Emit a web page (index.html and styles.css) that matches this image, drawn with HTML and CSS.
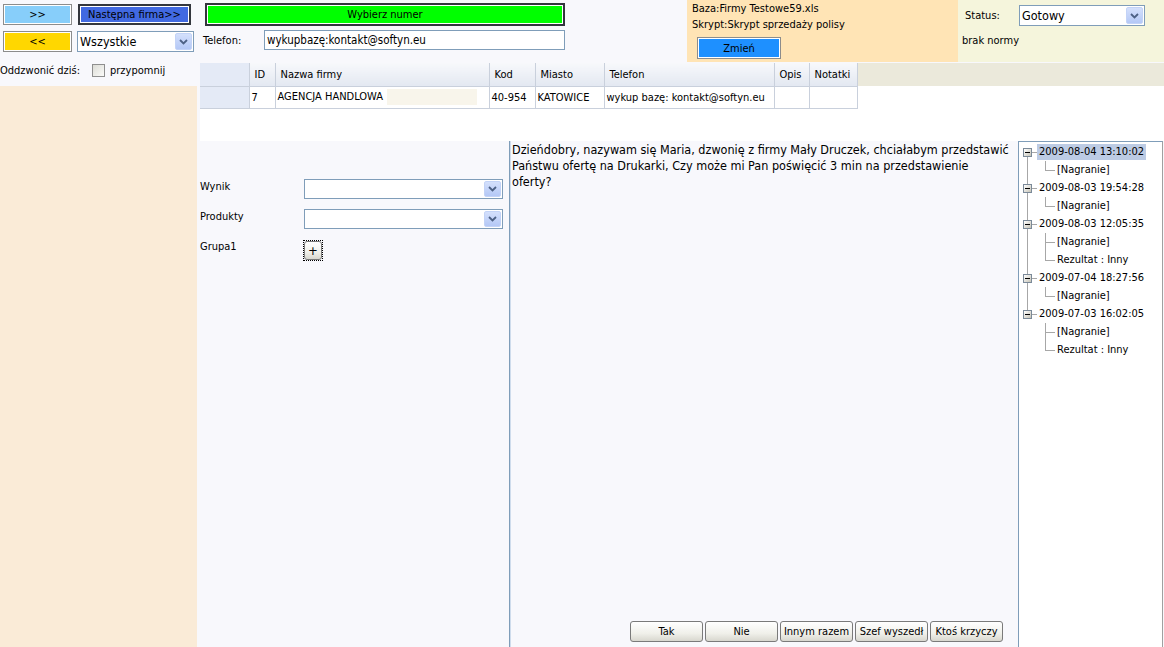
FILE: index.html
```html
<!DOCTYPE html>
<html lang="pl">
<head>
  <meta charset="UTF-8">
  <title>Telemarketing - rozmowa</title>
  <link rel="stylesheet" href="styles.css">
</head>
<body>
  <div class="app">
    <!-- lewa kolumna -->
    <aside class="side">
      <div class="side-top">
        <div class="side-row">
          <button class="btn-color btn-sky">&gt;&gt;</button>
          <button class="btn-color btn-royal is-default">Następna firma&gt;&gt;</button>
        </div>
        <div class="side-row">
          <button class="btn-color btn-gold">&lt;&lt;</button>
          <div class="combo combo-filter">Wszystkie<span class="arrow"><svg width="9" height="6" viewBox="0 0 9 6"><path d="M1 1 L4.5 4.5 L8 1" fill="none" stroke="#4d6185" stroke-width="1.8"/></svg></span></div>
        </div>
        <div class="callback">
          <span class="callback-label">Oddzwonić dziś:</span>
          <span class="check"></span>
          <span>przypomnij</span>
        </div>
      </div>
      <div class="side-fill"></div>
    </aside>

    <div class="work">
      <!-- pasek górny -->
      <div class="topbar">
        <div class="dial">
          <button class="btn-color btn-green is-default">Wybierz numer</button>
          <div class="phone-row">
            <span class="phone-label">Telefon:</span>
            <div class="textbox">wykupbazę:kontakt@softyn.eu</div>
          </div>
        </div>
        <div class="info">
          <div>Baza:Firmy Testowe59.xls</div>
          <div>Skrypt:Skrypt sprzedaży polisy</div>
          <button class="btn-color btn-dodger">Zmień</button>
        </div>
        <div class="status">
          <div class="status-row">
            <span class="status-label">Status:</span>
            <div class="combo combo-status">Gotowy<span class="arrow"><svg width="9" height="6" viewBox="0 0 9 6"><path d="M1 1 L4.5 4.5 L8 1" fill="none" stroke="#4d6185" stroke-width="1.8"/></svg></span></div>
          </div>
          <div class="norm">brak normy</div>
        </div>
      </div>

      <!-- tabela firm -->
      <div class="grid">
        <table>
          <thead>
            <tr>
              <th class="rowhead c-head"></th>
              <th class="c-id">ID</th>
              <th class="c-name">Nazwa firmy</th>
              <th class="c-code">Kod</th>
              <th class="c-city">Miasto</th>
              <th class="c-phone">Telefon</th>
              <th class="c-desc">Opis</th>
              <th class="c-notes">Notatki</th>
            </tr>
          </thead>
          <tbody>
            <tr>
              <td class="rowhead"></td>
              <td>7</td>
              <td>AGENCJA HANDLOWA <span class="masked"></span></td>
              <td>40-954</td>
              <td>KATOWICE</td>
              <td>wykup bazę: kontakt@softyn.eu</td>
              <td></td>
              <td></td>
            </tr>
          </tbody>
        </table>
      </div>

      <div class="main">
        <!-- formularz wyniku -->
        <div class="form">
          <div class="form-row">
            <span class="form-label">Wynik</span>
            <div class="combo combo-form"><span class="arrow"><svg width="9" height="6" viewBox="0 0 9 6"><path d="M1 1 L4.5 4.5 L8 1" fill="none" stroke="#4d6185" stroke-width="1.8"/></svg></span></div>
          </div>
          <div class="form-row">
            <span class="form-label">Produkty</span>
            <div class="combo combo-form"><span class="arrow"><svg width="9" height="6" viewBox="0 0 9 6"><path d="M1 1 L4.5 4.5 L8 1" fill="none" stroke="#4d6185" stroke-width="1.8"/></svg></span></div>
          </div>
          <div class="form-row">
            <span class="form-label">Grupa1</span>
            <span class="focus-ring"><button class="btn-xp btn-plus">+</button></span>
          </div>
        </div>

        <!-- skrypt rozmowy -->
        <div class="script">
          <p class="script-text">Dzieńdobry, nazywam się Maria, dzwonię z firmy Mały Druczek, chciałabym przedstawić Państwu ofertę na Drukarki, Czy może mi Pan poświęcić 3 min na przedstawienie<br>oferty?</p>
          <div class="answers">
            <button class="btn-xp">Tak</button>
            <button class="btn-xp">Nie</button>
            <button class="btn-xp">Innym razem</button>
            <button class="btn-xp">Szef wyszedł</button>
            <button class="btn-xp">Ktoś krzyczy</button>
          </div>
        </div>

        <!-- historia kontaktów -->
        <div class="tree">
          <div class="t-row"><span class="cell root first"><span class="minus"></span></span><span class="t-text selected">2009-08-04 13:10:02</span></div>
          <div class="t-row"><span class="cell pipe"></span><span class="cell ell"></span><span class="t-text">[Nagranie]</span></div>
          <div class="t-row"><span class="cell root"><span class="minus"></span></span><span class="t-text">2009-08-03 19:54:28</span></div>
          <div class="t-row"><span class="cell pipe"></span><span class="cell ell"></span><span class="t-text">[Nagranie]</span></div>
          <div class="t-row"><span class="cell root"><span class="minus"></span></span><span class="t-text">2009-08-03 12:05:35</span></div>
          <div class="t-row"><span class="cell pipe"></span><span class="cell tee"></span><span class="t-text">[Nagranie]</span></div>
          <div class="t-row"><span class="cell pipe"></span><span class="cell ell"></span><span class="t-text">Rezultat : Inny</span></div>
          <div class="t-row"><span class="cell root"><span class="minus"></span></span><span class="t-text">2009-07-04 18:27:56</span></div>
          <div class="t-row"><span class="cell pipe"></span><span class="cell ell"></span><span class="t-text">[Nagranie]</span></div>
          <div class="t-row"><span class="cell root last"><span class="minus"></span></span><span class="t-text">2009-07-03 16:02:05</span></div>
          <div class="t-row"><span class="cell"></span><span class="cell tee"></span><span class="t-text">[Nagranie]</span></div>
          <div class="t-row"><span class="cell"></span><span class="cell ell"></span><span class="t-text">Rezultat : Inny</span></div>
        </div>
      </div>
    </div>
  </div>
</body>
</html>
```

FILE: styles.css
```css
body {
  margin: 0;
  font-family: "DejaVu Sans Condensed", "Liberation Sans", sans-serif;
  font-size: 11px;
  color: #000;
  background: #f8f8fc;
}

.app {
  display: flex;
  width: 1164px;
  height: 647px;
  overflow: hidden;
}

button {
  font-family: inherit;
  font-size: 11px;
  color: #000;
  padding: 0;
  cursor: pointer;
}

/* lewa kolumna */
.side {
  width: 197px;
  flex-shrink: 0;
  display: flex;
  flex-direction: column;
}

.side-top {
  height: 86px;
  padding: 4px 0 0 3px;
  box-sizing: border-box;
}

.side-row {
  display: flex;
  align-items: center;
  height: 21px;
}

.side-row + .side-row {
  margin-top: 6px;
}

.side-fill {
  flex: 1;
  background: #faebd7;
}

.btn-color {
  height: 21px;
  box-sizing: border-box;
  border: 1px solid #8c8c8c;
  box-shadow: inset 0 0 0 1px #fff;
  text-align: center;
}

.btn-color.is-default {
  border: 2px solid #33363d;
}

.btn-sky {
  width: 69px;
  background: #87cefa;
}

.btn-royal {
  width: 113px;
  margin-left: 6px;
  background: #4169e1;
}

.btn-gold {
  width: 69px;
  background: #ffd700;
}

.btn-green {
  display: block;
  width: 360px;
  height: 23px;
  background: #00ff00;
}

.btn-dodger {
  display: block;
  width: 84px;
  height: 22px;
  margin: 4px 0 0 5px;
  background: #1e90ff;
}

.combo {
  display: flex;
  align-items: center;
  height: 21px;
  box-sizing: border-box;
  border: 1px solid #7f9db9;
  background: #fff;
  padding-left: 2px;
  font-size: 12.5px;
}

.combo .arrow {
  margin-left: auto;
  margin-right: 1px;
  width: 17px;
  height: 17px;
  border-radius: 2px;
  border: 1px solid #c3d3f7;
  box-sizing: border-box;
  background: linear-gradient(#d4e0fc, #b4c8f6);
  display: flex;
  align-items: center;
  justify-content: center;
}

.combo-filter {
  width: 117px;
  margin-left: 5px;
}

.callback {
  display: flex;
  align-items: center;
  margin: 12px 0 0 -3px;
}

.callback-label {
  width: 92px;
}

.check {
  width: 13px;
  height: 13px;
  box-sizing: border-box;
  border: 1px solid #8f8f8f;
  background: linear-gradient(135deg, #dcdcd6, #fbfbf9);
  margin-right: 5px;
}

/* pasek górny */
.work {
  flex: 1;
  display: flex;
  flex-direction: column;
}

.topbar {
  display: flex;
  height: 63px;
}

.dial {
  width: 490px;
  padding: 3px 0 0 8px;
  box-sizing: border-box;
}

.phone-row {
  display: flex;
  align-items: center;
  margin: 4px 0 0 -2px;
}

.phone-label {
  width: 61px;
}

.textbox {
  width: 301px;
  height: 20px;
  box-sizing: border-box;
  border: 1px solid #7f9db9;
  background: #fff;
  padding-left: 2px;
  font-size: 11.5px;
  line-height: 18px;
}

.info {
  width: 271px;
  height: 62px;
  background: #ffe4b5;
  padding: 1px 0 0 5px;
  box-sizing: border-box;
  line-height: 16px;
}

.status {
  flex: 1;
  height: 62px;
  background: #f5f5dc;
  padding: 5px 0 0 4px;
  box-sizing: border-box;
}

.status-row {
  display: flex;
  align-items: center;
}

.status-label {
  width: 54px;
  padding-left: 3px;
}

.combo-status {
  width: 126px;
}

.norm {
  margin-top: 8px;
}

/* tabela */
.grid {
  margin-left: 3px;
  height: 78px;
  background: linear-gradient(#ebe9db, #ebe9db) 0 0 / 100% 23px no-repeat, #fff;
}

.grid table {
  border-collapse: collapse;
}

.grid th,
.grid td {
  height: 22px;
  padding: 0 0 0 5px;
  border: 1px solid #c9d0dc;
  text-align: left;
  font-weight: normal;
  white-space: nowrap;
  box-sizing: border-box;
}

.grid th {
  height: 23px;
  border-top: none;
  background: linear-gradient(#f7f8fb, #e3e8f1);
}

.grid td {
  padding-left: 2px;
}

.grid .rowhead {
  background: #e4eaf6;
  border-left: none;
}

.c-head { width: 49px; }
.c-id { width: 26px; }
.c-name { width: 214px; }
.c-code { width: 46px; }
.c-city { width: 69px; }
.c-phone { width: 170px; }
.c-desc { width: 35px; }
.c-notes { width: 48px; }

.masked {
  display: inline-block;
  width: 90px;
  height: 16px;
  margin-left: 1px;
  vertical-align: middle;
  background: #f8f5eb;
}

/* część główna */
.main {
  flex: 1;
  display: flex;
  min-height: 0;
}

.form {
  width: 312px;
  padding: 38px 5px 0 3px;
  box-sizing: border-box;
}

.form-row {
  display: flex;
  align-items: flex-start;
  height: 30px;
}

.form-label {
  width: 104px;
  padding-top: 1px;
}

.combo-form {
  width: 199px;
  height: 20px;
}

.combo-form .arrow {
  height: 16px;
}

.focus-ring {
  display: inline-block;
  margin-top: 2px;
  outline: 1px dotted #000;
}

.btn-xp {
  height: 21px;
  box-sizing: border-box;
  border: 1px solid #7a7a7a;
  border-radius: 3px;
  background: linear-gradient(#ffffff, #f0f0ea 60%, #d8d7cf);
}

.btn-plus {
  display: block;
  width: 18px;
  height: 19px;
  font-size: 13px;
  line-height: 15px;
}

.script {
  width: 509px;
  box-sizing: border-box;
  border-left: 1px solid #7f9db9;
  box-shadow: inset 1px 0 #cfdcec;
  display: flex;
  flex-direction: column;
  padding-left: 1px;
}

.script-text {
  flex: 1;
  margin: 0;
  padding: 1px 2px 0 1px;
  font-size: 12.5px;
  line-height: 16px;
}

.answers {
  display: flex;
  gap: 2px;
  justify-content: flex-end;
  padding: 0 15px 5px 0;
}

.answers .btn-xp {
  width: 73px;
}

/* drzewo historii */
.tree {
  width: 145px;
  box-sizing: border-box;
  border: 1px solid #7f9db9;
  border-right-color: #a0a0a0;
  border-bottom: none;
  background: #fff;
  padding-top: 1px;
}

.t-row {
  display: flex;
  align-items: center;
  height: 18px;
}

.cell {
  position: relative;
  width: 18px;
  height: 18px;
  flex-shrink: 0;
  --ln: #a7a7a7;
}

.pipe {
  background: linear-gradient(var(--ln), var(--ln)) 8px 0 / 1px 100% no-repeat;
}

.tee {
  background:
    linear-gradient(var(--ln), var(--ln)) 8px 0 / 1px 100% no-repeat,
    linear-gradient(var(--ln), var(--ln)) 8px 9px / 10px 1px no-repeat;
}

.ell {
  background:
    linear-gradient(var(--ln), var(--ln)) 8px 0 / 1px 9px no-repeat,
    linear-gradient(var(--ln), var(--ln)) 8px 9px / 10px 1px no-repeat;
}

.root {
  background:
    linear-gradient(var(--ln), var(--ln)) 8px 0 / 1px 100% no-repeat,
    linear-gradient(var(--ln), var(--ln)) 8px 9px / 10px 1px no-repeat;
}

.root.first {
  background:
    linear-gradient(var(--ln), var(--ln)) 8px 9px / 1px 9px no-repeat,
    linear-gradient(var(--ln), var(--ln)) 8px 9px / 10px 1px no-repeat;
}

.root.last {
  background:
    linear-gradient(var(--ln), var(--ln)) 8px 0 / 1px 9px no-repeat,
    linear-gradient(var(--ln), var(--ln)) 8px 9px / 10px 1px no-repeat;
}

.minus {
  position: absolute;
  left: 4px;
  top: 5px;
  width: 9px;
  height: 9px;
  box-sizing: border-box;
  border: 1px solid #7b8a99;
  background: linear-gradient(135deg, #ffffff, #c6c3b6);
}

.minus::after {
  content: "";
  position: absolute;
  left: 1px;
  top: 3px;
  width: 5px;
  height: 1px;
  background: #000;
}

.t-text {
  padding: 0 2px;
  line-height: 16px;
  white-space: nowrap;
}

.t-text.selected {
  background: #bccbe4;
}
```
